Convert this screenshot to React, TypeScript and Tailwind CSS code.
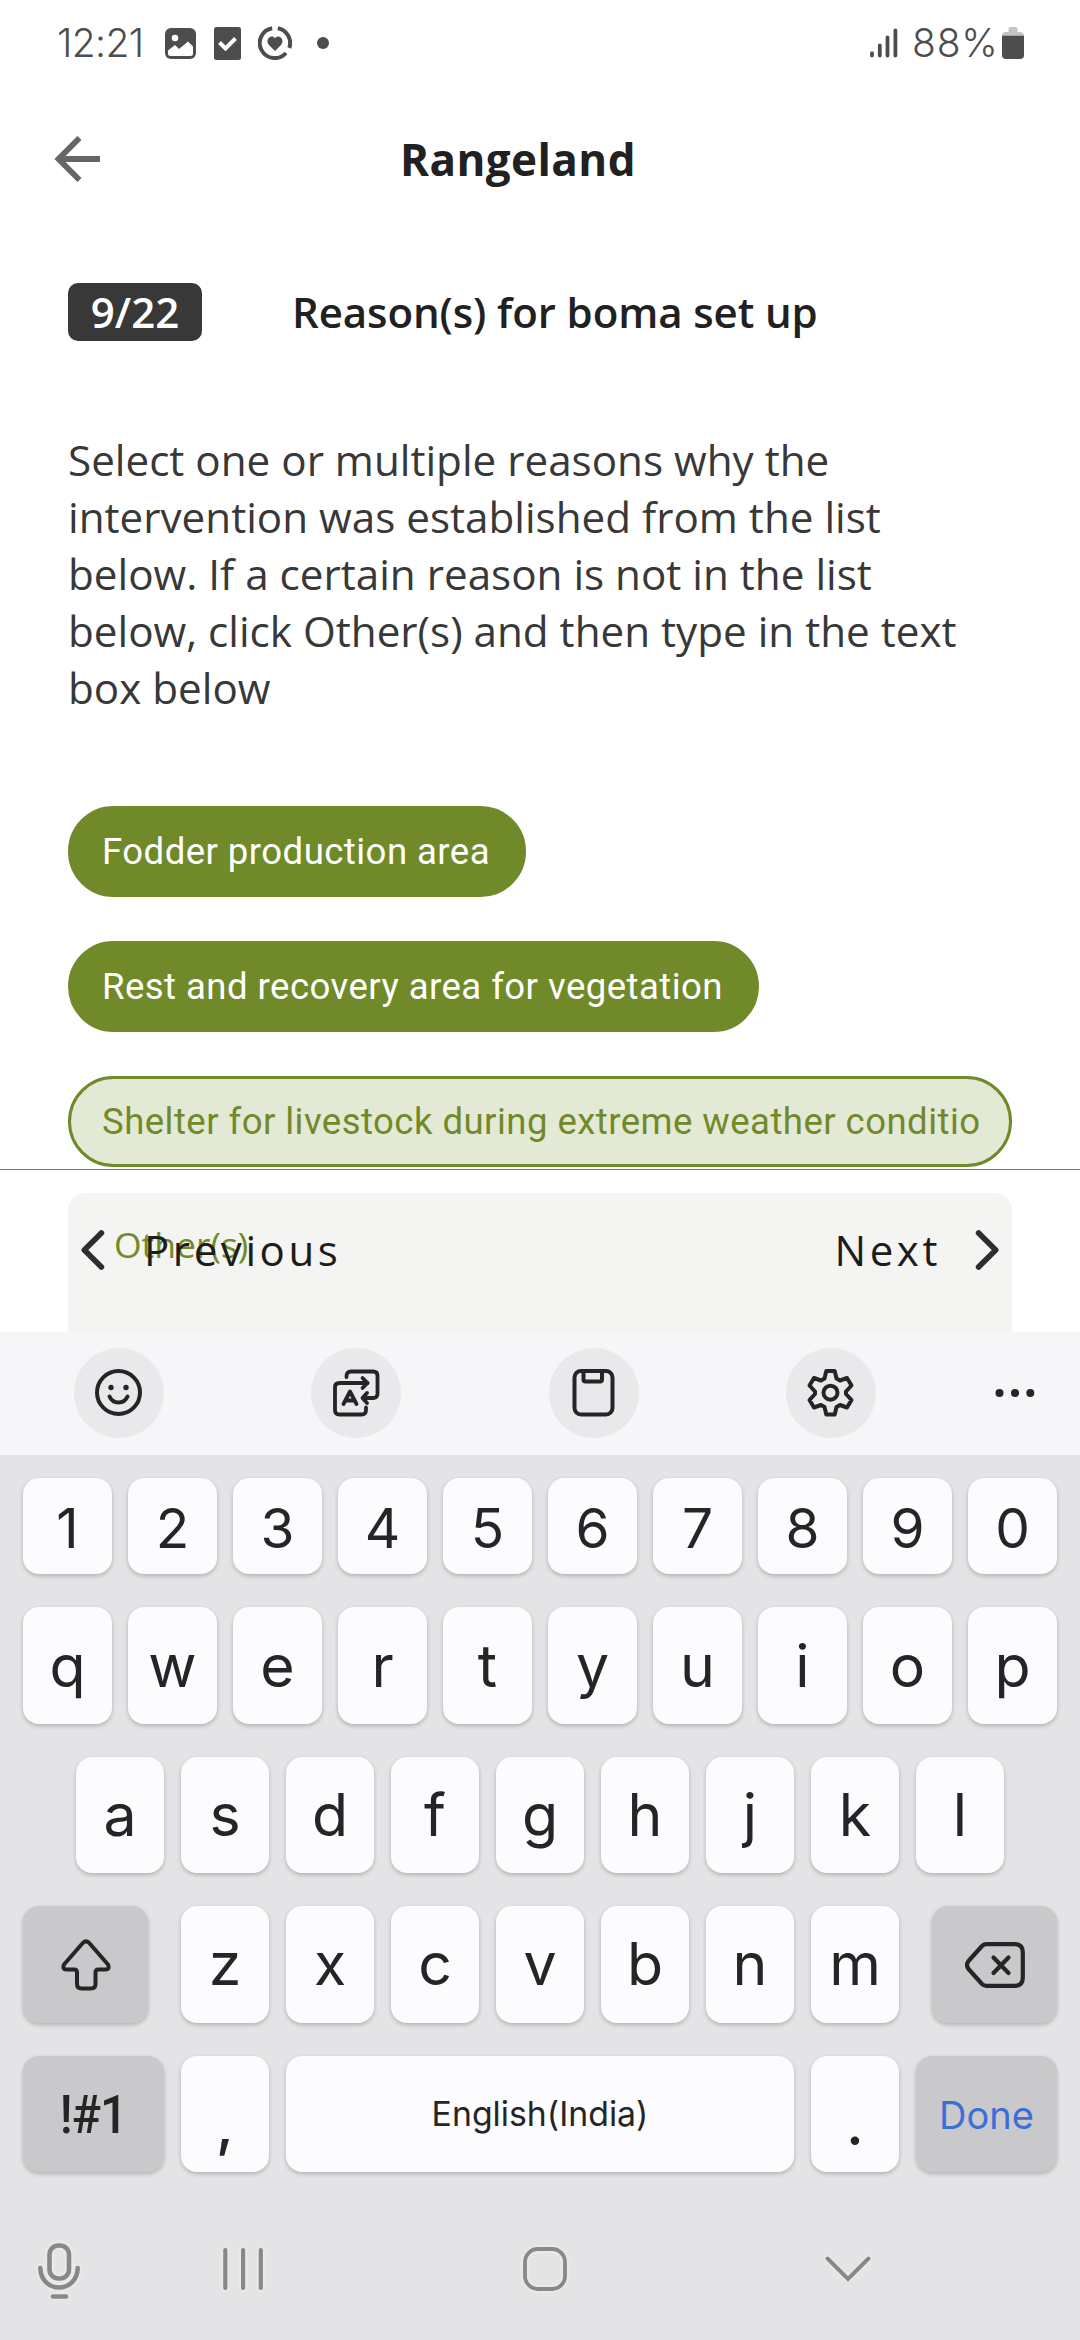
import type { ReactNode } from "react";

const openSans = "font-['Open_Sans',sans-serif]";
const inter = "font-['Inter',sans-serif]";

function StatusBar() {
  return (
    <div className="flex h-[86px] shrink-0 items-center pl-[57px] pr-[56px] font-['Inter',sans-serif] text-[39px] font-[350] leading-[86px] text-[#4d4d4d]">
      <span className="w-[108px] tracking-[-0.6px] whitespace-nowrap">12:21</span>
      <svg width="31" height="31" viewBox="0 0 31 31" fill="none">
        <rect width="31" height="31" rx="6" fill="#4d4d4d" />
        <circle cx="10" cy="10" r="3.3" fill="#fff" />
        <path d="M3 22.5L10 17L14 21L23 13.5L28 18.5V25.5Q28 28 25.5 28H5.5Q3 28 3 25.5Z" fill="#fff" />
      </svg>
      <svg className="ml-[18px]" width="27" height="33" viewBox="0 0 27 33" fill="none">
        <rect width="27" height="33" rx="2.5" fill="#4d4d4d" />
        <path d="M5.5 15.5L11.5 21.5L21.5 11.5" stroke="#fff" strokeWidth="4" />
      </svg>
      <svg className="ml-[17px]" width="34" height="34" viewBox="0 0 34 34" fill="none" stroke="#4d4d4d" strokeWidth="4">
        <path d="M14.2 2.300A15 15 0 1 0 28 27" />
        <path d="M19.800 2.300A15 15 0 0 1 31.3 22" />
        <path d="M17 25L11 19C6.500 14 13 7.500 17 12.200C21 7.500 27.500 14 23 19Z" fill="#4d4d4d" stroke="none" />
      </svg>
      <div className="ml-[25px] h-[12px] w-[12px] rounded-full bg-[#4d4d4d]" />
      <svg className="ml-auto" width="28" height="30" viewBox="0 0 28 30" stroke="#4d4d4d" strokeWidth="3.8" strokeLinecap="round">
        <path d="M2 25.2V27.5M9.8 17.5V27.5M17.5 9.5V27.5M25.4 2.5V27.5" />
      </svg>
      <span className="ml-[14px] w-[90px] tracking-[0.8px] whitespace-nowrap">88%</span>
      <svg width="22" height="32" viewBox="0 0 22 32">
        <path d="M6.5 5V2Q6.5 0 8.5 0H13.5Q15.5 0 15.5 2V5H18Q22 5 22 9H0Q0 5 4 5Z" fill="#c4c4c4" />
        <path d="M0 8.7H22V28Q22 32 18 32H4Q0 32 0 28Z" fill="#4d4d4d" />
      </svg>
    </div>
  );
}

function Header() {
  return (
    <header className="grid h-[146px] shrink-0 grid-cols-[1fr_auto_1fr] items-center pl-[54px] pr-[98px]">
      <svg width="47" height="46" viewBox="0 0 47 46" fill="none" stroke="#666" strokeWidth="5.8">
        <path d="M25.5 2L4.5 23L25.5 44M4.5 23H46" />
      </svg>
      <h1 className={`${openSans} text-[44px] font-bold leading-[60px] tracking-[0.4px] text-[#212121]`}>Rangeland</h1>
    </header>
  );
}

function Chip({ children, muted = false }: { children: ReactNode; muted?: boolean }) {
  return (
    <div
      className={`h-[91px] max-w-full rounded-full border-[3px] border-[#708a2a] pl-[31px] pr-[33px] font-['Roboto',sans-serif] text-[36.56px] leading-[85px] tracking-[0.45px] whitespace-nowrap ${
        muted ? "bg-[#e4e9d6] text-[#708a2a]" : "bg-[#708a2a] text-white"
      }`}
    >
      {children}
    </div>
  );
}

function Question() {
  return (
    <main className="relative flex min-h-0 flex-1 flex-col overflow-hidden px-[68px] pt-[51px]">
      <div className={`${openSans} flex items-center text-[42px] leading-[58px]`}>
        <span className="h-[58px] w-[134px] rounded-[10px] bg-[#383838] text-center font-semibold text-white">9/22</span>
        <h2 className="ml-[90px] font-semibold tracking-[-0.1px] whitespace-nowrap text-[#212121]">Reason(s) for boma set up</h2>
      </div>
      <p className={`${openSans} mt-[90px] text-[42.19px] leading-[57px] whitespace-nowrap text-[#383838]`}>
        Select one or multiple reasons why the
        <br />
        intervention was established from the list
        <br />
        below. If a certain reason is not in the list
        <br />
        below, click Other(s) and then type in the text
        <br />
        box below
      </p>
      <div className="mt-[90px] flex flex-col items-start gap-[44px]">
        <Chip>Fodder production area</Chip>
        <Chip>Rest and recovery area for vegetation</Chip>
        <Chip muted>Shelter for livestock during extreme weather conditio</Chip>
      </div>
      <div className={`${openSans} mt-[26px] flex-1 rounded-t-[17px] bg-[#f4f4f2] pl-[46px] pt-[27px] text-[35.5px] leading-[48px] text-[#708a2a]`}>
        Other(s)
      </div>
      <nav className={`${openSans} absolute inset-x-0 bottom-0 flex h-[163px] items-start justify-between border-t border-[#6f8438] px-[80px] pt-[52px] text-[42px] leading-[56px] tracking-[3.6px] text-[#1c1c1c]`}>
        <div className="flex items-center gap-[39px]">
          <svg width="25" height="42" viewBox="0 0 25 42" fill="none" stroke="#2e2e30" strokeWidth="5.6" strokeLinecap="round" strokeLinejoin="round">
            <path d="M21.4 4L4.3 21L21.4 38" />
          </svg>
          <span>Previous</span>
        </div>
        <div className="flex items-center gap-[34px]">
          <span>Next</span>
          <svg width="25" height="42" viewBox="0 0 25 42" fill="none" stroke="#2e2e30" strokeWidth="5.6" strokeLinecap="round" strokeLinejoin="round">
            <path d="M3.6 4L20.7 21L3.6 38" />
          </svg>
        </div>
      </nav>
    </main>
  );
}

function ToolButton({ children }: { children: ReactNode }) {
  return (
    <div className="flex h-[90px] w-[90px] items-center justify-center rounded-full bg-[#e9e9eb]">
      <svg width="50" height="50" viewBox="0 0 50 50" fill="none" stroke="#252527" strokeWidth="4" strokeLinecap="round" strokeLinejoin="round">
        {children}
      </svg>
    </div>
  );
}

function Toolbar() {
  return (
    <div className="flex h-[123px] shrink-0 items-center gap-[147.3px] bg-[#f6f6f8] pb-px pl-[74px]">
      <ToolButton>
        <circle cx="24.5" cy="24.5" r="21.5" />
        <circle cx="17" cy="19.5" r="2.7" fill="#252527" stroke="none" />
        <circle cx="32" cy="19.5" r="2.7" fill="#252527" stroke="none" />
        <path d="M15.5 28.5C19 36.5 30 36.5 33.5 28.5" />
      </ToolButton>
      <ToolButton>
        <path strokeWidth="3.8" d="M15.500 9V8Q15.500 3.500 20 3.500H42Q46.500 3.500 46.500 8V25.500Q46.500 30 42 30H32.500M36.500 15H8.500Q4 15 4 19.500V42Q4 46.500 8.500 46.500H30.500Q35 46.500 35 42V39.500" />
        <path strokeWidth="3.8" d="M31.500 10L36.500 15L31.500 20M36 25L31.500 30L36 35M12.500 36L19 23.500L25.500 36M15.500 32.500H22.500" />
      </ToolButton>
      <ToolButton>
        <rect x="5.500" y="3" width="38" height="43.500" rx="6.500" />
        <path d="M14.500 3V11.500Q14.500 13.500 16.500 13.500H31Q33 13.500 33 11.500V3" />
      </ToolButton>
      <ToolButton>
        <path d="M20.300 3H28.700L30.500 10.500L34 12.500L41 10L45.500 17.500L40 23.500V26L45.500 32L41 39.500L34 37L30.500 39L28.700 46.500H20.300L18.500 39L15 37L8 39.500L3.500 32L9 26V23.500L3.500 17.500L8 10L15 12.500L18.500 10.500Z" />
        <circle cx="24.500" cy="24.700" r="7" />
      </ToolButton>
      <svg className="ml-[-28px]" width="40" height="10" viewBox="0 0 40 10" fill="#252527">
        <circle cx="4.500" cy="5" r="4" />
        <circle cx="20" cy="5" r="4" />
        <circle cx="35.300" cy="5" r="4" />
      </svg>
    </div>
  );
}

function Key({ children, className = "w-[88px]", dark = false }: { children: ReactNode; className?: string; dark?: boolean }) {
  return (
    <div
      className={`flex shrink-0 items-center justify-center rounded-[16px] shadow-[0_2px_4px_rgba(0,0,0,0.22)] ${
        dark ? "bg-[#c9c9cb]" : "bg-[#fcfcfe]"
      } ${className}`}
    >
      {children}
    </div>
  );
}

function Keyboard() {
  return (
    <section className={`${inter} flex h-[885px] shrink-0 flex-col bg-[#e4e4e6] px-[23px] pt-[23px] text-[59px] text-[#252527]`}>
      <div className="flex h-[96px] gap-[16px] text-[55px]">
        {"1234567890".split("").map((k) => (
          <Key key={k} className="w-[89px] pt-1">{k}</Key>
        ))}
      </div>
      <div className="mt-[33px] flex h-[117px] gap-[16px]">
        {"qwertyuiop".split("").map((k) => (
          <Key key={k} className="w-[89px] pt-px">{k}</Key>
        ))}
      </div>
      <div className="mt-[33px] flex h-[116px] gap-[17px] pl-[53px]">
        {"asdfghjkl".split("").map((k) => (
          <Key key={k}>{k}</Key>
        ))}
      </div>
      <div className="mt-[33px] flex h-[117px] justify-between">
        <Key dark className="w-[125px]">
          <svg width="50" height="52" viewBox="0 0 50 52" fill="none" stroke="#252527" strokeWidth="4" strokeLinejoin="round">
            <path d="M22 3.700Q25 1 28 3.700L47 25.500Q49 30.500 44.500 30.500H37.500Q34.500 30.500 34.500 33.500V45Q34.500 49.500 30 49.500H20.500Q16 49.500 16 45V33.500Q16 30.500 13 30.500H5.500Q1 30.500 3 25.500Z" />
          </svg>
        </Key>
        <div className="flex gap-[17px]">
          {"zxcvbnm".split("").map((k) => (
            <Key key={k}>{k}</Key>
          ))}
        </div>
        <Key dark className="w-[125px]">
          <svg width="60" height="46" viewBox="0 0 60 46" fill="none" stroke="#252527" strokeWidth="4.200" strokeLinecap="round" strokeLinejoin="round">
            <path d="M21.500 2.100H49.500Q57.800 2.100 57.800 10.500V35.500Q57.800 43.900 49.500 43.900H21.500Q19 43.900 17 42L3.500 27Q0.500 23 3.500 19L17 4Q19 2.100 21.500 2.100Z" />
            <path d="M28.500 15.500L43.500 31M43.500 15.500L28.500 31" />
          </svg>
        </Key>
      </div>
      <div className="mt-[33px] flex h-[116px] gap-[17px]">
        <Key dark className="w-[141px] font-['Roboto',sans-serif] text-[54px] font-medium tracking-[-1px]">
          <span className="inline-block scale-x-[0.9]">!#1</span>
        </Key>
        <Key className="w-[88px] pt-[20px] font-medium">,</Key>
        <Key className="w-[508px] pt-px text-[33.8px]">English(India)</Key>
        <Key className="w-[88px] pt-[21px] font-medium">.</Key>
        <Key dark className="w-[141px] pt-[2px] text-[38px] text-[#3b6fd8]">Done</Key>
      </div>
      <div className="ml-[13px] mt-[69px] flex h-[60px] items-center [filter:drop-shadow(0_0_2px_#f4f4f4)]">
        <svg width="46" height="60" viewBox="0 0 46 60" fill="none" stroke="#888" strokeWidth="4.600" strokeLinecap="round">
          <rect x="13.500" y="4.500" width="19.500" height="33" rx="9" />
          <path d="M4.300 27C5 53 41 53 41.700 27M17 55.500H30" />
        </svg>
        <svg className="mb-1 ml-[139px]" width="46" height="46" viewBox="0 0 46 46" fill="none" stroke="#888" strokeWidth="4.200" strokeLinecap="round">
          <path d="M4.300 4V42M22.100 4V42M39.800 4V42" />
        </svg>
        <svg className="mb-1 ml-[255px]" width="46" height="46" viewBox="0 0 46 46" fill="none" stroke="#888" strokeWidth="3.800">
          <rect x="3" y="3" width="40" height="40" rx="13" />
        </svg>
        <svg className="mb-1 ml-[256px]" width="48" height="28" viewBox="0 0 48 28" fill="none" stroke="#888" strokeWidth="4" strokeLinecap="round">
          <path d="M3.500 3.500L24 24L44.500 3.500" />
        </svg>
      </div>
    </section>
  );
}

export default function App() {
  return (
    <div className="flex h-[2340px] w-[1080px] flex-col overflow-hidden bg-white">
      <StatusBar />
      <Header />
      <Question />
      <Toolbar />
      <Keyboard />
    </div>
  );
}
